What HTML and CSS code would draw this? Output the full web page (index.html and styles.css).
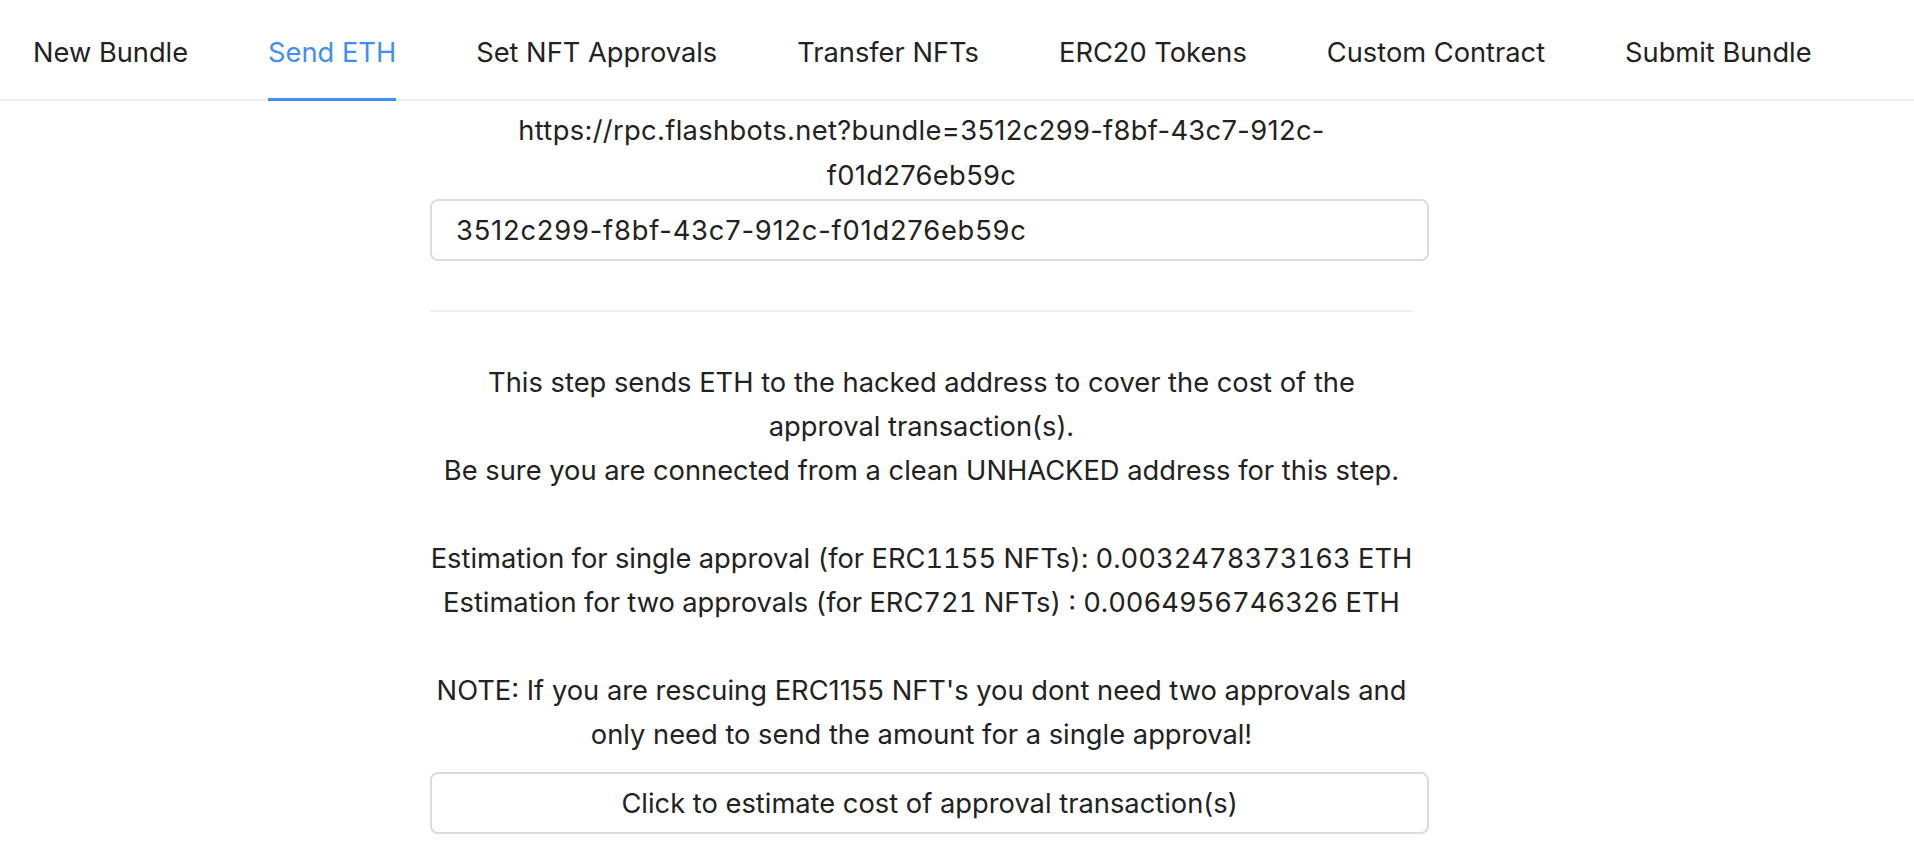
FILE: index.html
```html
<!DOCTYPE html>
<html lang="en">
<head>
<meta charset="utf-8">
<title>Send ETH</title>
<link rel="stylesheet" href="styles.css">
</head>
<body>
<nav class="tabs">
  <div class="tab">New Bundle</div>
  <div class="tab active">Send ETH</div>
  <div class="tab">Set NFT Approvals</div>
  <div class="tab">Transfer NFTs</div>
  <div class="tab">ERC20 Tokens</div>
  <div class="tab">Custom Contract</div>
  <div class="tab">Submit Bundle</div>
</nav>
<main class="main">
  <div class="url">https://rpc.flashbots.net?bundle=3512c299-f8bf-43c7-912c-<br>f01d276eb59c</div>
  <input class="field" type="text" value="3512c299-f8bf-43c7-912c-f01d276eb59c">
  <hr class="divider">
  <p class="info">This step sends ETH to the hacked address to cover the cost of the<br>approval transaction(s).<br>Be sure you are connected from a clean UNHACKED address for this step.<br><br><span class="num">Estimation for single approval (for ERC1155 NFTs): 0.0032478373163 ETH</span><br><span class="num">Estimation for two approvals (for ERC721 NFTs) : 0.0064956746326 ETH</span><br><br>NOTE: If you are rescuing ERC1155 NFT's you dont need two approvals and<br>only need to send the amount for a single approval!</p>
  <button class="btn" type="button">Click to estimate cost of approval transaction(s)</button>
</main>
</body>
</html>
```

FILE: styles.css
```css
html, body {
  margin: 0;
  padding: 0;
  background: #ffffff;
}
body {
  font-family: Inter, "Noto Sans", sans-serif;
  color: #222222;
}
.tabs {
  display: flex;
  gap: 80px;
  padding-left: 33px;
  height: 99px;
  border-bottom: 2px solid #f0f0f0;
}
.tab {
  position: relative;
  display: flex;
  align-items: center;
  padding-top: 6px;
  font-size: 27.25px;
  color: #222222;
}
.tab.active {
  color: #3f8ef3;
}
.tab.active::after {
  content: "";
  position: absolute;
  left: 0;
  right: 0;
  bottom: -2px;
  height: 3px;
  background: #3f8ef3;
}
.main {
  width: 983px;
  margin-left: 430px;
  padding-top: 7px;
  text-align: center;
  font-size: 27.3px;
  line-height: 44px;
}
.url {
  margin: 0 -12px;
  line-height: 45px;
  letter-spacing: 0.34px;
}
.field {
  display: block;
  box-sizing: border-box;
  width: 999px;
  height: 62px;
  margin: 1px 0 0;
  padding: 0 24px;
  border: 2px solid #dcdcdc;
  border-radius: 8px;
  font-family: inherit;
  font-size: 27.3px;
  letter-spacing: 0.8px;
  color: #222222;
  background: #fff;
  outline: none;
}
.divider {
  margin: 49px 0 0;
  border: 0;
  height: 2px;
  background: #efefef;
}
.info {
  margin: 49px -12px 0;
}
.num {
  font-variant-numeric: tabular-nums;
}
.btn {
  display: block;
  box-sizing: border-box;
  width: 999px;
  height: 62px;
  margin: 15px 0 0;
  border: 2px solid #dcdcdc;
  border-radius: 8px;
  background: #fff;
  font-family: inherit;
  font-size: 27.3px;
  color: #222222;
  box-shadow: 0 3px 0 rgba(0, 0, 0, 0.02);
}
```
